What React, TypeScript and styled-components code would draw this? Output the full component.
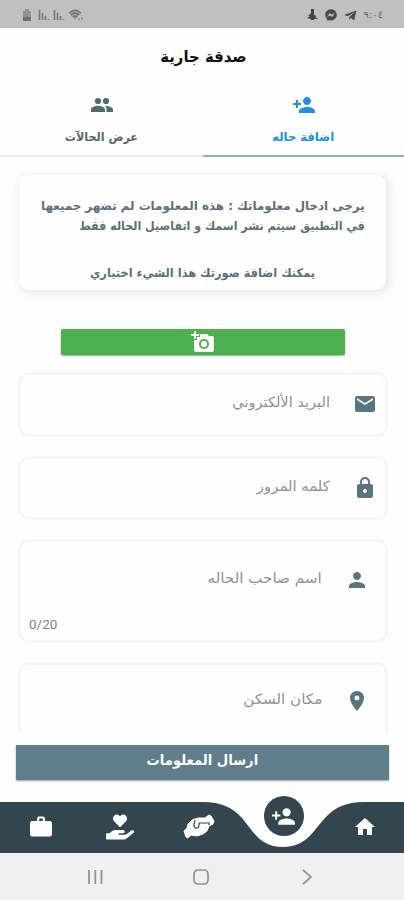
import React from "react";
import styled, { createGlobalStyle } from "styled-components";
import {
  MdPersonAdd, MdAddAPhoto, MdEmail, MdLock, MdPerson,
  MdLocationOn, MdHome,
} from "react-icons/md";
import { FaHandHoldingHeart, FaFacebookMessenger, FaTelegramPlane } from "react-icons/fa";

const GlobalStyle = createGlobalStyle`
  * { box-sizing: border-box; }
  body { margin: 0; background: #fefefe; font-family: "DejaVu Sans", sans-serif; }
  button { font-family: inherit; border: 0; margin: 0; padding: 0; }
`;

const Screen = styled.div`
  width: 404px;
  height: 900px;
  display: flex;
  flex-direction: column;
  overflow: hidden;
  background: #fefefe;
`;

const StatusBar = styled.header`
  height: 28px;
  flex: none;
  background: #c0c0c0;
  color: #4c4c4c;
  display: flex;
  justify-content: space-between;
  align-items: center;
  padding: 2px 21px 0 22px;
`;

const StatusGroup = styled.div<{ $gap: number }>`
  display: flex;
  align-items: center;
  gap: ${(p) => p.$gap}px;
`;

const Clock = styled.span`
  font-size: 10px;
  line-height: 12px;
  color: #6a6a6a;
`;

const Text = styled.span<{ $size: number; $weight?: number; $stretch?: number }>`
  display: inline-block;
  white-space: nowrap;
  font-size: ${(p) => p.$size}px;
  font-weight: ${(p) => p.$weight ?? 400};
  line-height: 20px;
  transform: scaleX(${(p) => p.$stretch ?? 1});
`;

const TitleBar = styled.h1`
  height: 56px;
  flex: none;
  margin: 0;
  padding: 2px 0 0 2px;
  display: flex;
  align-items: center;
  justify-content: center;
  color: #111;
`;

const Tabs = styled.nav`
  height: 73px;
  flex: none;
  display: grid;
  grid-template-columns: 203px 201px;
`;

const Tab = styled.button<{ $active?: boolean }>`
  display: flex;
  flex-direction: column;
  align-items: center;
  padding-top: 9px;
  gap: 10px;
  background: none;
  color: ${(p) => (p.$active ? "#2090e8" : "#526b70")};
  border-bottom: 2px solid ${(p) => (p.$active ? "#82b6d4" : "#e9ebed")};
`;

const Form = styled.main`
  height: 575px;
  flex: none;
  overflow: hidden;
  padding: 18px 16px 0 18px;
  display: flex;
  flex-direction: column;
`;

const Notice = styled.section`
  height: 115px;
  flex: none;
  margin: 0 2px 0 1px;
  border-radius: 10px;
  background: #fefefe;
  box-shadow: 2px 2px 8px 1px #e6e6e6;
  color: #58737c;
  padding: 21px 21px 0 20px;
  direction: rtl;
  display: flex;
  flex-direction: column;

  ${Text} { transform-origin: right; align-self: flex-start; }
  ${Text}:last-child { transform-origin: center; align-self: center; margin-top: 27px; }
`;

const PhotoButton = styled.button`
  width: 284px;
  height: 26px;
  flex: none;
  margin: 39px 0 17px 43px;
  border-radius: 2px;
  background: #4caf50;
  color: #fff;
  box-shadow: 0 1px 2px #9aa99a;
  display: flex;
  align-items: center;
  justify-content: center;
`;

const Field = styled.label<{ $height: number; $inset: number; $top: number }>`
  width: 370px;
  height: ${(p) => p.$height}px;
  flex: none;
  margin-bottom: 19px;
  border: 3px solid #f7f7f7;
  border-radius: 11px;
  color: #8f9193;
  direction: rtl;
  display: flex;
  align-items: flex-start;
  padding: ${(p) => p.$top}px ${(p) => p.$inset}px 0 8px;
  gap: 23px;

  svg { flex: none; color: #587681; }
  ${Text} { transform-origin: right; }
`;

const Counter = styled.span`
  margin-right: auto;
  align-self: flex-end;
  padding-bottom: 8px;
  direction: ltr;
  font: 13.5px/16px Roboto, sans-serif;
  color: #828282;
`;

const Submit = styled.button`
  width: 373px;
  height: 35px;
  margin: 13px 0 0 16px;
  flex: none;
  background: #607d8b;
  color: #fff;
  box-shadow: 0 1px 2px #92a2aa;
  border-radius: 1px;
  padding-bottom: 5px;
`;

const BottomNav = styled.nav`
  position: relative;
  height: 51px;
  margin-top: 22px;
  flex: none;
  color: #fff;
`;

const Wave = styled.svg`
  display: block;
`;

const NavItems = styled.div`
  position: absolute;
  inset: 0;
  display: grid;
  grid-template-columns: 81px 78px 80px 89px 74px;
  justify-items: center;
  align-items: center;
  padding-bottom: 2px;
`;

const ActiveItem = styled.div`
  width: 40px;
  height: 40px;
  border-radius: 50%;
  background: #33454e;
  display: grid;
  place-items: center;
  margin-top: -21px;
`;

const SystemBar = styled.footer`
  height: 47px;
  flex: none;
  background: #f0f0f0;
  display: grid;
  grid-template-columns: 16px 16px 16px;
  justify-content: center;
  align-items: center;
  gap: 90px;
  padding: 1px 2px 0 0;
`;

const Signal = () => (
  <svg width="12" height="12" viewBox="0 0 12 12" fill="none" stroke="#777" strokeWidth="1.6">
    <path d="M1.500 1v10M4.500 4v7M7.500 7v4M10.500 10v1" />
  </svg>
);

const People = () => (
  <svg width="24" height="24" viewBox="0 0 24 24" fill="currentColor">
    <circle cx="8" cy="8" r="3.1" />
    <circle cx="16" cy="8" r="3.1" />
    <path d="M1 19v-2.500C1 14 5.700 12.800 8 12.800S15 14 15 16.500V19zM16.500 19v-2.500c0-1.500-.7-2.600-1.700-3.500 3-.3 8.200 1 8.200 3.500V19z" />
  </svg>
);

const Briefcase = () => (
  <svg width="22" height="21" viewBox="0 0 22 21">
    <path d="M7 5V2l1.500-1.500h5L15 2v3h5.500L22 6.500v12.500L20.500 20.500h-19L0 19V6.500L1.500 5zm2.200 0h3.600V2.500H9.200z" fill="#fff" fillRule="evenodd" />
  </svg>
);

const ClaspedHands = () => (
  <svg width="32" height="26" viewBox="0 0 32 26">
    <path d="M1 17l3-3 1-4 4-4 6-2h7l4-3 2 1 3 5-1 3-4 2-2 5-4 3-6 2-6-1-3 3-2-1z" fill="#fff" stroke="#fff" strokeWidth="1" strokeLinejoin="round" />
    <path d="M12 6l-1 5q0 3.500 3 3 2 0 2.200-5H26v2" fill="none" stroke="#33454e" strokeWidth="1.200" />
  </svg>
);

export default function App() {
  return (
    <Screen>
      <GlobalStyle />
      <StatusBar>
        <StatusGroup $gap={3}>
          <svg width="13" height="13" viewBox="0 0 13 13"><path d="M3 0h4v2h2v9H1V2h2z" fill="#929292" /><path d="M1 8h8v4H1z" fill="#707070" /></svg>
          <Signal />
          <Signal />
          <svg width="16" height="12" viewBox="0 0 16 12"><path d="M1 4q6-6 12 0l-6 7z" fill="#9a9a9a" /><path d="M1 4q6-6 12 0M3 6q4-4 8 0M5 8q2-2 4 0" fill="none" stroke="#606060" /><path d="M11 9v2M14 8v3" stroke="#777" /></svg>
        </StatusGroup>
        <StatusGroup $gap={7}>
          <svg width="11" height="12" viewBox="0 0 11 12" fill="#444"><path d="M4 0h3v6l3 1-2 1 3 2-4 0v1H4v-1L0 9l3-2-2 0 3-3z" /></svg>
          <FaFacebookMessenger size={12} />
          <FaTelegramPlane size={13} />
          <Clock>٩:٠٤</Clock>
        </StatusGroup>
      </StatusBar>
      <TitleBar><Text $size={16} $weight={700} $stretch={0.93}>صدقة جارية</Text></TitleBar>
      <Tabs>
        <Tab><People /><Text $size={12} $weight={700} $stretch={0.93}>عرض الحالآت</Text></Tab>
        <Tab $active><MdPersonAdd size={24} /><Text $size={12} $weight={700} $stretch={0.96}>اضافة حاله</Text></Tab>
      </Tabs>
      <Form>
        <Notice>
          <Text $size={12} $weight={700} $stretch={0.988}>يرجى ادخال معلوماتك : هذه المعلومات لم تضهر جميعها</Text>
          <Text $size={12} $weight={700} $stretch={0.925}>في التطبيق سيتم نشر اسمك و اتفاصيل الحاله فقط</Text>
          <Text $size={12} $weight={700} $stretch={0.95}>يمكنك اضافة صورتك هذا الشيء اختياري</Text>
        </Notice>
        <PhotoButton><MdAddAPhoto size={24} /></PhotoButton>
        <Field $height={65} $inset={8} $top={17}><MdEmail size={24} /><Text $size={14} $stretch={1.04}>البريد الألكتروني</Text></Field>
        <Field $height={64} $inset={8} $top={17}><MdLock size={24} /><Text $size={14} $stretch={1.06}>كلمه المرور</Text></Field>
        <Field $height={104} $inset={16} $top={26}><MdPerson size={24} /><Text $size={14} $stretch={1.08}>اسم صاحب الحاله</Text><Counter>0/20</Counter></Field>
        <Field $height={104} $inset={16} $top={24}><MdLocationOn size={24} /><Text $size={14} $stretch={1.08}>مكان السكن</Text></Field>
      </Form>
      <Submit><Text $size={14} $weight={700} $stretch={0.94}>ارسال المعلومات</Text></Submit>
      <BottomNav>
        <Wave width="404" height="51" viewBox="0 0 404 51">
          <path d="M0 0H202C222 0 233 6 242 16C253 29 260 45 283 45S313 29 325 16C334 6 345 0 365 0H404V51H0Z" fill="#33454e" />
        </Wave>
        <NavItems>
          <Briefcase />
          <FaHandHoldingHeart size={28} />
          <ClaspedHands />
          <ActiveItem><MdPersonAdd size={25} /></ActiveItem>
          <MdHome size={24} />
        </NavItems>
      </BottomNav>
      <SystemBar>
        <svg width="16" height="16" viewBox="0 0 16 16" stroke="#929292" strokeWidth="1.800"><path d="M2 1v14M8.300 1v14M14.500 1v14" /></svg>
        <svg width="16" height="16" viewBox="0 0 16 16" fill="none" stroke="#929292" strokeWidth="1.700"><rect x="1" y="1" width="14" height="14" rx="4" /></svg>
        <svg width="16" height="16" viewBox="0 0 16 16" fill="none" stroke="#929292" strokeWidth="1.700"><path d="M4 1l8 7-8 7" /></svg>
      </SystemBar>
    </Screen>
  );
}
